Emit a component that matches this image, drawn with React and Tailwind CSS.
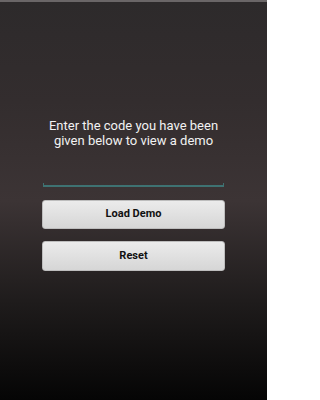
export default function App() {
  return (
    <div
      className="w-[267px] h-[400px] flex flex-col border-t-2 border-[#6a6667] bg-[linear-gradient(to_bottom,#2d2a2b_0%,#332d2e_25%,#3c3435_50%,#1f1c1c_75%,#050505_100%)]"
      style={{ fontFamily: 'Roboto, "Noto Sans", sans-serif' }}
    >
      <div className="pt-[116px] px-[42px] flex flex-col">
        <p className="text-center text-[13px] leading-[15px] text-[#f2f2f2]">
          Enter the code you have been
          <br />
          given below to view a demo
        </p>
        <div className="mt-[29px] h-[10px] mx-[1px] relative">
          <div className="absolute left-0 right-0 bottom-0 h-[2px] bg-[#3e7272]" />
          <div className="absolute left-0 bottom-0 w-[1px] h-[4px] bg-[#3e7272]" />
          <div className="absolute right-0 bottom-0 w-[1px] h-[4px] bg-[#3e7272]" />
        </div>
        <button className="mt-[13px] h-[29px] w-[183px] rounded-[3px] bg-[linear-gradient(to_bottom,#ebebeb,#d6d6d6)] border border-[#bdbdbd] text-[11px] font-bold text-[#111]">
          Load Demo
        </button>
        <button className="mt-[12px] h-[30px] w-[183px] rounded-[3px] bg-[linear-gradient(to_bottom,#ebebeb,#d6d6d6)] border border-[#bdbdbd] text-[11px] font-bold text-[#111]">
          Reset
        </button>
      </div>
    </div>
  );
}
